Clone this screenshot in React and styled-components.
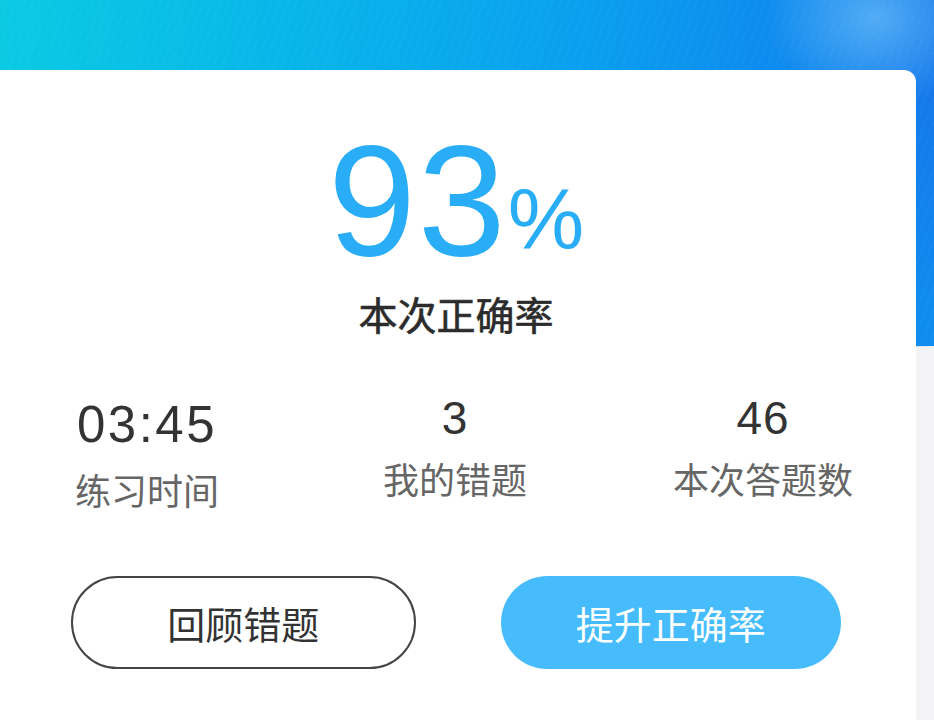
import React from 'react';
import styled, {createGlobalStyle} from 'styled-components';

const GlobalStyle = createGlobalStyle`
  body {
    margin: 0;
    background: #f3f3f5;
    font-family: "Liberation Sans", "Noto Sans CJK SC", sans-serif;
    overflow: hidden;
  }
`;

const Page = styled.div`
  width: 934px;
  height: 720px;
  overflow: hidden;
`;

const Header = styled.div`
  height: 350px;
  background:
    radial-gradient(ellipse 110px 90px at 875px 18px, rgba(160, 225, 255, 0.45), rgba(160, 225, 255, 0) 100%),
    repeating-linear-gradient(110deg, rgba(255, 255, 255, 0) 0 7px, rgba(255, 255, 255, 0.04) 7px 8px),
    linear-gradient(to bottom, rgba(12, 145, 240, 0) 100px, rgba(12, 150, 240, 0.7) 320px),
    linear-gradient(95deg, #0bcae2 0%, #08b6ea 30%, #0aa0ef 60%, #0d8cef 80%, #1676ea 100%);
  clip-path: polygon(0 0, 100% 0, 100% 346px, 0 352px);
`;

const Card = styled.div`
  position: relative;
  box-sizing: border-box;
  width: 916px;
  height: 650px;
  margin-top: -280px;
  padding-top: 51px;
  background: #fff;
  border-radius: 0 12px 0 0;
`;

const Score = styled.div`
  text-align: center;
  color: #29adf6;
  line-height: 1;
  height: 156px;
  padding-right: 4px;
`;

const ScoreNum = styled.span`
  font-size: 158px;
  letter-spacing: 2px;
`;

const ScorePct = styled.span`
  font-size: 86px;
  vertical-align: 6px;
`;

const Title = styled.div`
  margin-top: 13px;
  text-align: center;
  font-family: "Noto Sans CJK SC", sans-serif;
  font-size: 39px;
  font-weight: 400;
  -webkit-text-stroke: 0.6px #2b2b2b;
  line-height: 1.2;
  color: #2b2b2b;
  padding-right: 4px;
`;

const Stats = styled.div`
  display: grid;
  grid-template-columns: repeat(3, 308px);
  justify-content: center;
  margin-top: 58px;
  padding-right: 6px;
`;

const Stat = styled.div`
  display: flex;
  flex-direction: column;
  align-items: center;
  padding-top: ${p => (p.$low ? '4px' : '0')};
`;

const StatNum = styled.div`
  font-size: ${p => (p.$big ? '51px' : '46px')};
  letter-spacing: ${p => (p.$big ? '2.5px' : '1px')};
  line-height: 1;
  color: #333;
`;

const StatLabel = styled.div`
  margin-top: ${p => (p.$low ? '18px' : '16px')};
  font-family: "Noto Sans CJK SC", sans-serif;
  font-size: 36px;
  line-height: 1.2;
  color: #666;
`;

const Actions = styled.div`
  display: flex;
  gap: 85px;
  margin-top: 65px;
  padding: 0 75px 0 71px;
`;

const Button = styled.button`
  flex: 1;
  height: 93px;
  border-radius: 47px;
  box-sizing: border-box;
  font-family: "Noto Sans CJK SC", sans-serif;
  font-size: 38px;
  cursor: pointer;
  border: ${p => (p.$primary ? 'none' : '2px solid #444')};
  background: ${p => (p.$primary ? '#46bcfd' : '#fff')};
  color: ${p => (p.$primary ? '#fff' : '#333')};
`;

const stats = [
  {value: '03:45', label: '练习时间', low: true},
  {value: '3', label: '我的错题'},
  {value: '46', label: '本次答题数'},
];

export default function App() {
  return (
    <Page>
      <GlobalStyle />
      <Header />
      <Card>
        <Score>
          <ScoreNum>93</ScoreNum>
          <ScorePct>%</ScorePct>
        </Score>
        <Title>本次正确率</Title>
        <Stats>
          {stats.map(s => (
            <Stat key={s.label} $low={s.low}>
              <StatNum $big={s.low}>{s.value}</StatNum>
              <StatLabel $low={s.low}>{s.label}</StatLabel>
            </Stat>
          ))}
        </Stats>
        <Actions>
          <Button>回顾错题</Button>
          <Button $primary>提升正确率</Button>
        </Actions>
      </Card>
    </Page>
  );
}
